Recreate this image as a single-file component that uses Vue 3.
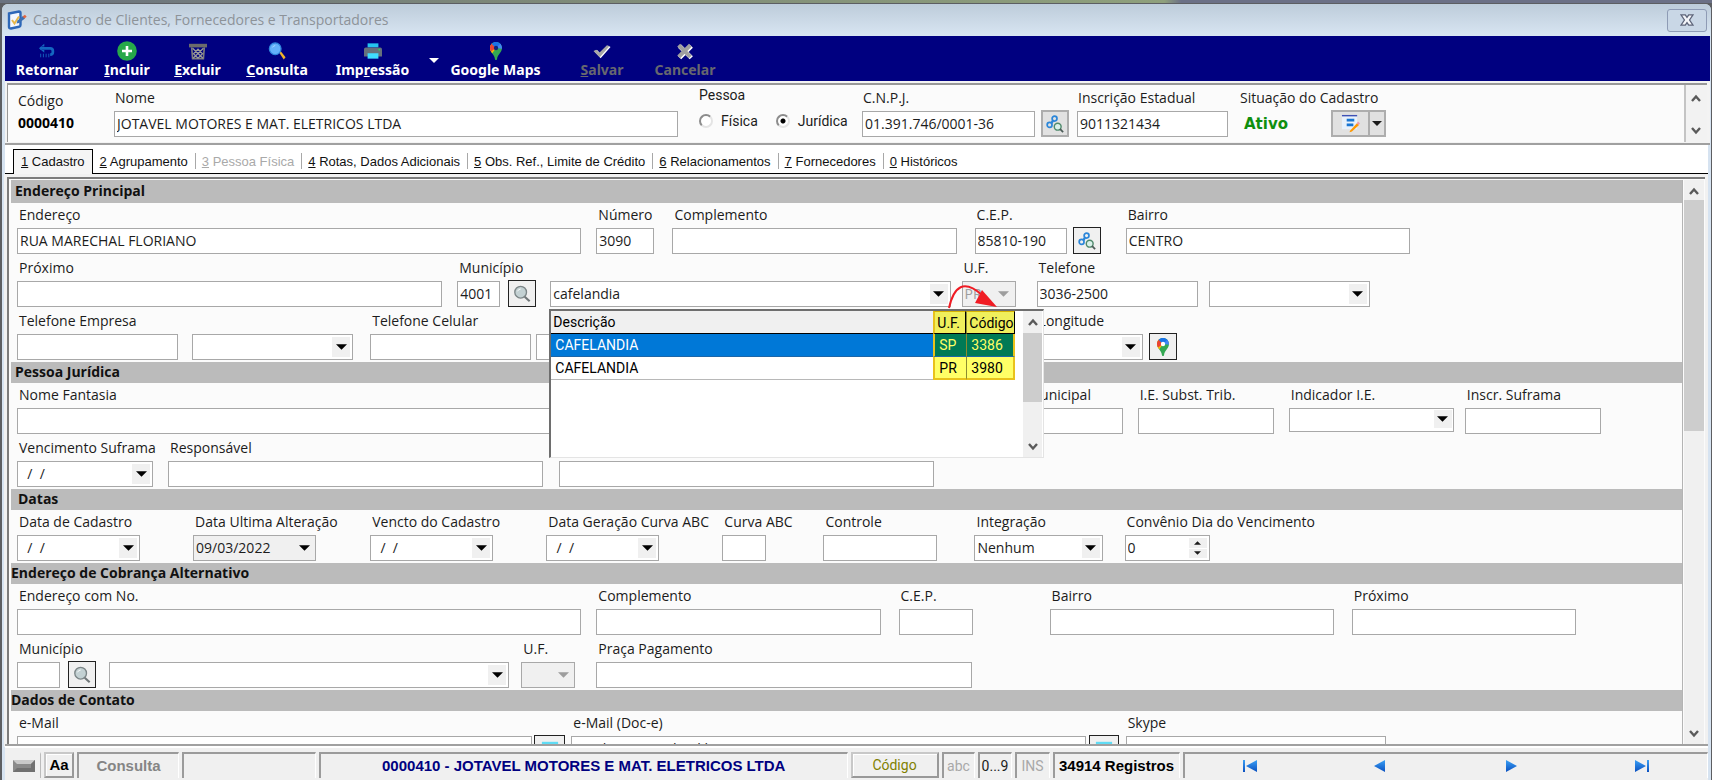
<script setup>
import { ref } from 'vue'

const pessoa = ref('juridica')

const tools = [
  { key: 'retornar', pre: 'Retornar', hot: '', post: '', icon: 'i-return' },
  { key: 'incluir', pre: '', hot: 'I', post: 'ncluir', icon: 'i-plus' },
  { key: 'excluir', pre: '', hot: 'E', post: 'xcluir', icon: 'i-bin' },
  { key: 'consulta', pre: '', hot: 'C', post: 'onsulta', icon: 'i-search' },
  { key: 'impressao', pre: 'Imp', hot: 'r', post: 'essão', icon: 'i-print' },
  { key: 'mais', icon: '' },
  { key: 'maps', pre: 'Google Maps', hot: '', post: '', icon: 'i-pin' },
  { key: 'salvar', pre: '', hot: 'S', post: 'alvar', icon: 'i-check', off: true },
  { key: 'cancelar', pre: 'Cancelar', hot: '', post: '', icon: 'i-cross', off: true },
]

const tabs = [
  { n: '1', t: 'Cadastro' },
  { n: '2', t: 'Agrupamento' },
  { n: '3', t: 'Pessoa Física', off: true },
  { n: '4', t: 'Rotas, Dados Adicionais' },
  { n: '5', t: 'Obs. Ref., Limite de Crédito' },
  { n: '6', t: 'Relacionamentos' },
  { n: '7', t: 'Fornecedores' },
  { n: '0', t: 'Históricos' },
]

const text = (label, value = '') => ({ kind: 'text', label, value })
const select = (label, value = '', extra = {}) => ({ kind: 'select', label, value, ...extra })
const date = (label, value = '  /  /', off = false) => ({ kind: 'date', label, value, off })
const button = (name, icon) => ({ kind: 'button', name, icon })

const sections = [
  {
    title: 'Endereço Principal',
    cls: 'first',
    rows: [
      {
        cls: 'r-endereco',
        fields: [
          text('Endereço', 'RUA MARECHAL FLORIANO'),
          text('Número', '3090'),
          text('Complemento'),
          text('C.E.P.', '85810-190'),
          button('Consultar C.E.P.', 'i-nodes'),
          text('Bairro', 'CENTRO'),
        ],
      },
      {
        cls: 'r-municipio',
        fields: [
          text('Próximo'),
          text('Município', '4001'),
          button('Localizar município', 'i-lens'),
          select('', 'cafelandia', { name: 'Nome do município', popup: true }),
          select('U.F.', 'PR', { off: true }),
          text('Telefone', '3036-2500'),
          select('', '', { name: 'Tipo de telefone' }),
        ],
      },
      {
        cls: 'r-telefone',
        fields: [
          text('Telefone Empresa'),
          select('', '', { name: 'Tipo de telefone da empresa' }),
          text('Telefone Celular'),
          select('', '', { name: 'Tipo de celular' }),
          select('Longitude'),
          button('Abrir mapa', 'i-pin'),
        ],
      },
    ],
  },
  {
    title: 'Pessoa Jurídica',
    cls: 'inset',
    rows: [
      {
        cls: 'r-fantasia',
        fields: [
          text('Nome Fantasia'),
          text('Inscr. Municipal'),
          text('I.E. Subst. Trib.'),
          select('Indicador I.E.', '', { small: true }),
          text('Inscr. Suframa'),
        ],
      },
      {
        cls: 'r-suframa',
        fields: [
          date('Vencimento Suframa'),
          text('Responsável'),
          { ...text(''), name: 'Complemento do responsável' },
        ],
      },
    ],
  },
  {
    title: 'Datas',
    cls: 'deep',
    rows: [
      {
        cls: 'r-datas',
        fields: [
          date('Data de Cadastro'),
          date('Data Ultima Alteração', '09/03/2022', true),
          date('Vencto do Cadastro'),
          date('Data Geração Curva ABC'),
          text('Curva ABC'),
          text('Controle'),
          select('Integração', 'Nenhum'),
          { kind: 'spin', label: 'Convênio Dia do Vencimento', value: '0' },
        ],
      },
    ],
  },
  {
    title: 'Endereço de Cobrança Alternativo',
    cls: '',
    rows: [
      {
        cls: 'r-cobranca',
        fields: [
          text('Endereço com No.'),
          text('Complemento'),
          text('C.E.P.'),
          text('Bairro'),
          text('Próximo'),
        ],
      },
      {
        cls: 'r-praca',
        fields: [
          text('Município'),
          button('Localizar município de cobrança', 'i-lens'),
          select('', '', { name: 'Nome do município de cobrança' }),
          select('U.F.', '', { off: true }),
          text('Praça Pagamento'),
        ],
      },
    ],
  },
  {
    title: 'Dados de Contato',
    cls: '',
    rows: [
      {
        cls: 'r-email',
        fields: [
          text('e-Mail'),
          button('Enviar e-Mail', 'i-mail'),
          text('e-Mail (Doc-e)', 'vendas@jotavel.ind.br'),
          button('Enviar e-Mail (Doc-e)', 'i-mail'),
          text('Skype'),
        ],
      },
    ],
  },
]

const cities = [
  { name: 'CAFELANDIA', uf: 'SP', code: '3386', on: true },
  { name: 'CAFELANDIA', uf: 'PR', code: '3980' },
]

const nav = [
  { name: 'Primeiro', icon: 'i-first' },
  { name: 'Anterior', icon: 'i-prev' },
  { name: 'Próximo', icon: 'i-next' },
  { name: 'Último', icon: 'i-last' },
]
</script>

<template>
  <div class="desk">
    <svg class="sprite" aria-hidden="true">
      <defs>
        <linearGradient id="g-blue" x1="0" y1="0" x2="0" y2="1">
          <stop offset="0" stop-color="#3aa0f5" />
          <stop offset="1" stop-color="#0a50c0" />
        </linearGradient>
        <clipPath id="c-pin"><path d="M9 0C5.500 0 3 2.700 3 6c0 4.500 4.500 6 5 11.500q1 1.200 2 0C10.500 12 15 10.500 15 6c0-3.300-2.500-6-6-6z" /></clipPath>
      </defs>
      <symbol id="i-app" viewBox="0 0 20 20">
        <path d="M2 3.500 12 1.500q1.500 0 1.500 1.500v12q0 1.500-1.500 1.800L4 18.500Q2 18.500 2 17z" fill="#f4f8ff" stroke="#2d67b8" stroke-width="2.400" />
        <path d="M5 10l2.500 3.500L12 6.500" fill="none" stroke="#e8b84a" stroke-width="2" />
        <path d="M9.500 13.500 10.500 10.500l5.500-4.500 2 2.500-6 4.500z" fill="#3c70b4" />
        <path d="M15.500 6.500l2.500-1.800 1.700 2-2.200 1.800z" fill="#e2663e" />
      </symbol>
      <symbol id="i-return" viewBox="0 0 20 20">
        <path d="M2.500 7h11q3 0 3 3v1.500q0 2.500-3 2.500" fill="none" stroke="#1466c0" stroke-width="3" />
        <path d="M1 7l6-5v3H4v4h3v3z" fill="#1466c0" />
        <path d="M3 13v4M6 13v4M9 13v4M12 13v4" stroke="#1466c0" />
      </symbol>
      <symbol id="i-plus" viewBox="0 0 20 20">
        <circle cx="10" cy="10" r="9.800" fill="#27a84a" />
        <path d="M10 5v10M5 10h10" stroke="#fff" stroke-width="2.600" />
      </symbol>
      <symbol id="i-bin" viewBox="0 0 20 20">
        <path d="M0 2h20v4H0z" fill="#6b6b6b" />
        <path d="M3 6l1 12.500h12L17 6" fill="none" stroke="#7c7c7c" stroke-width="1.800" />
        <path d="M4 7l11.500 11M16 7 4.500 18M10 8l-5 5 5 5 5-5z" fill="none" stroke="#9a9a9a" stroke-width="1.400" />
      </symbol>
      <symbol id="i-search" viewBox="0 0 20 20">
        <path d="M12 11l2-1 5.500 7-2 2.500z" fill="#f0b429" />
        <circle cx="8" cy="7.500" r="6.500" fill="#63b0fa" stroke="#2f86dc" stroke-width="1.400" />
        <path d="M5 6q1-2 3-2" fill="none" stroke="#b4dcff" />
      </symbol>
      <symbol id="i-print" viewBox="0 0 20 20">
        <path d="M4 1.500h12V6H4z" fill="#25c4f0" />
        <path d="M0 8q0-2 2-2h16q2 0 2 2v8H0z" fill="#66717c" />
        <path d="M4 12.500h12v6H4z" fill="#3fdcff" />
        <circle cx="17" cy="8.500" r="1" fill="#27d860" />
      </symbol>
      <symbol id="i-pin" viewBox="0 0 18 18">
        <g clip-path="url(#c-pin)">
          <path d="M0 0h18v18H0z" fill="#34a853" />
          <path d="M0 1.500 4 0l5 6-5 7-4-4z" fill="#fbbc04" />
          <path d="M9 6 4.500 1 0 2v6.500l4 1z" fill="#ea4335" />
          <path d="M9 6 4.500 1.800V0H14v3z" fill="#1a73e8" />
          <path d="M9 6 13 2l3-1v6z" fill="#4285f4" />
        </g>
        <circle cx="9" cy="6" r="2.200" fill="currentColor" />
      </symbol>
      <symbol id="i-check" viewBox="0 0 20 20">
        <path d="M1.500 10.500l3-1.500 3.500 3.500L16.500 4l3 1.500L8.500 18z" fill="#fff" />
        <path d="M.5 10l3-1.500L7 12l8.500-8.500 2.500 1.500L7.500 17z" fill="#a6a6a6" />
      </symbol>
      <symbol id="i-cross" viewBox="0 0 20 20">
        <path d="M4 4.500l13 13M17 4.500l-13 13" stroke="#fff" stroke-width="5" />
        <path d="M3 3.500l13 13M16 3.500l-13 13" stroke="#a0a0a0" stroke-width="4.600" />
      </symbol>
      <symbol id="i-nodes" viewBox="0 0 20 20">
        <g fill="none" stroke="#2b86d9" stroke-width="1.900">
          <circle cx="4" cy="11" r="2.700" />
          <circle cx="9.500" cy="4" r="2.700" />
          <path d="M6 9l2-3" stroke-width="2.600" />
        </g>
        <circle cx="13" cy="13" r="3.800" fill="#d9f0ea" stroke="#4f8a6c" stroke-width="1.600" />
        <path d="M15.500 15.500l3.500 3.500" stroke="#4c5c58" stroke-width="2" />
      </symbol>
      <symbol id="i-lens" viewBox="0 0 20 20">
        <circle cx="8.500" cy="8" r="6.500" fill="#c3d1d3" stroke="#7b8587" stroke-width="1.500" />
        <path d="M5 7q1-2.500 3.500-2.500" fill="none" stroke="#fff" />
        <path d="M13 13l5.500 5" stroke="#6f7678" stroke-width="2.400" />
      </symbol>
      <symbol id="i-mail" viewBox="0 0 20 20"><path d="M1 2h18v15H1z" fill="#5fdcf5" /></symbol>
      <symbol id="i-list" viewBox="0 0 20 20">
        <path d="M1 2h16v14H1z" fill="#e8f1fb" />
        <path d="M1 1h16v1.500H1z" fill="#3f51b5" />
        <path d="M6 5h8v3H6zM6 10h7v3H6z" fill="#1976d2" />
        <path d="M9.500 17.500 17 9.500l2 2-7.500 7-2.500.8z" fill="#ff9800" />
        <path d="M16.500 10l1.500-2 2 2-1.500 1.500z" fill="#ef9aa8" />
      </symbol>
      <symbol id="i-key" viewBox="0 0 22 12">
        <path d="M0 0h22v12H0z" fill="#8a8a8a" />
        <path d="M0 0h22l-4 4H4z" fill="#c9c9c9" />
        <path d="M0 12h22V0l-4 4v4H4z" fill="#707070" />
      </symbol>
      <symbol id="i-first" viewBox="0 0 16 14"><path d="M1 1h2v12H1zM15 1v12L4 7z" fill="url(#g-blue)" /></symbol>
      <symbol id="i-prev" viewBox="0 0 16 14"><path d="M13 1v12L2 7z" fill="url(#g-blue)" /></symbol>
      <symbol id="i-next" viewBox="0 0 16 14"><path d="M3 1v12l11-6z" fill="url(#g-blue)" /></symbol>
      <symbol id="i-last" viewBox="0 0 16 14"><path d="M13 1h2v12h-2zM1 1v12l11-6z" fill="url(#g-blue)" /></symbol>
      <symbol id="i-up" viewBox="0 0 12 10"><path d="M2 8l4-4.500L10 8" fill="none" stroke="#5a5a5a" stroke-width="2.400" /></symbol>
      <symbol id="i-down" viewBox="0 0 12 10"><path d="M2 2l4 4.500L10 2" fill="none" stroke="#5a5a5a" stroke-width="2.400" /></symbol>
      <symbol id="i-tri" viewBox="0 0 12 6"><path d="M0 0h12L6 6z" fill="currentColor" /></symbol>
    </svg>

    <main class="window">
      <header class="title">
        <svg class="app-icon"><use href="#i-app" /></svg>
        <h1>Cadastro de Clientes, Fornecedores e Transportadores</h1>
        <button class="close" aria-label="Fechar">
          <svg viewBox="0 0 16 14"><path d="M1 1h5l2 3 2-3h5l-4 6 4 6h-5l-2-3-2 3H1l4-6z" fill="#f4f6fa" stroke="#5d6479" stroke-width="1.500" /></svg>
        </button>
      </header>

      <nav class="toolbar">
        <template v-for="t in tools" :key="t.key">
          <button v-if="t.icon" :class="['tool', t.key]" :disabled="t.off">
            <svg><use :href="'#' + t.icon" /></svg>
            <span>{{ t.pre }}<u v-if="t.hot">{{ t.hot }}</u>{{ t.post }}</span>
          </button>
          <button v-else class="tool more" aria-label="Opções de impressão">
            <svg><use href="#i-tri" /></svg>
          </button>
        </template>
      </nav>

      <section class="head">
        <div class="head-panel">
          <div class="head-grid">
            <div class="codigo"><span>Código</span><b>0000410</b></div>
            <div class="field">
              <label for="nome">Nome</label>
              <input id="nome" class="box" value="JOTAVEL MOTORES E MAT. ELETRICOS LTDA" />
            </div>
            <fieldset class="pessoa">
              <legend>Pessoa</legend>
              <label><input v-model="pessoa" type="radio" name="pessoa" value="fisica" />Física</label>
              <label><input v-model="pessoa" type="radio" name="pessoa" value="juridica" />Jurídica</label>
            </fieldset>
            <div class="field">
              <label for="cnpj">C.N.P.J.</label>
              <input id="cnpj" class="box" value="01.391.746/0001-36" />
            </div>
            <button class="icon-btn soft" aria-label="Consultar C.N.P.J."><svg><use href="#i-nodes" /></svg></button>
            <div class="field">
              <label for="ie">Inscrição Estadual</label>
              <input id="ie" class="box" value="9011321434" />
            </div>
            <div class="situacao">
              <span>Situação do Cadastro</span>
              <div class="sit-line">
                <b>Ativo</b>
                <span class="split">
                  <button aria-label="Alterar situação"><svg class="list-icon"><use href="#i-list" /></svg></button>
                  <button aria-label="Mais situações"><svg class="tri"><use href="#i-tri" /></svg></button>
                </span>
              </div>
            </div>
          </div>
          <div class="mini-scroll">
            <svg><use href="#i-up" /></svg>
            <svg><use href="#i-down" /></svg>
          </div>
        </div>
      </section>

      <div class="tabs" role="tablist">
        <button v-for="(t, i) in tabs" :key="t.n" role="tab" :aria-selected="i === 0" :class="{ on: i === 0 }" :disabled="t.off">
          <u>{{ t.n }}</u> {{ t.t }}
        </button>
      </div>

      <div class="pane">
        <form class="form" @submit.prevent>
          <section v-for="(s, si) in sections" :key="s.title" class="group">
            <h2 :class="s.cls">{{ s.title }}</h2>
            <div v-for="(r, ri) in s.rows" :key="r.cls" :class="['row', r.cls]">
              <template v-for="(f, fi) in r.fields" :key="fi">
                <button v-if="f.kind === 'button'" type="button" class="icon-btn" :aria-label="f.name">
                  <svg><use :href="'#' + f.icon" /></svg>
                </button>
                <div v-else class="field">
                  <label v-if="f.label" :for="`f${si}-${ri}-${fi}`">{{ f.label }}</label>
                  <input v-if="f.kind === 'text'" :id="`f${si}-${ri}-${fi}`" class="box" :value="f.value" :aria-label="f.name" />
                  <div v-else-if="f.kind === 'select'" :class="['combo', { off: f.off, small: f.small }]">
                    <select :id="`f${si}-${ri}-${fi}`" class="box" :disabled="f.off" :aria-label="f.name">
                      <option>{{ f.value }}</option>
                    </select>
                    <span class="drop"><svg><use href="#i-tri" /></svg></span>
                  </div>
                  <div v-else-if="f.kind === 'date'" :class="['combo', { locked: f.off }]">
                    <input :id="`f${si}-${ri}-${fi}`" class="box" :value="f.value" :readonly="f.off" />
                    <button type="button" class="drop" aria-label="Calendário"><svg><use href="#i-tri" /></svg></button>
                  </div>
                  <div v-else class="combo">
                    <input :id="`f${si}-${ri}-${fi}`" class="box" :value="f.value" />
                    <span class="spin">
                      <button type="button" aria-label="Aumentar"><svg class="flip"><use href="#i-tri" /></svg></button>
                      <button type="button" aria-label="Diminuir"><svg><use href="#i-tri" /></svg></button>
                    </span>
                  </div>

                  <div v-if="f.popup" class="popup">
                    <div class="list">
                      <table>
                        <thead>
                          <tr><th>Descrição</th><th class="hl">U.F.</th><th class="hl code">Código</th></tr>
                        </thead>
                        <tbody>
                          <tr v-for="c in cities" :key="c.code" :class="{ on: c.on }">
                            <td>{{ c.name }}</td><td class="hl">{{ c.uf }}</td><td class="hl code">{{ c.code }}</td>
                          </tr>
                        </tbody>
                      </table>
                    </div>
                    <div class="scroll">
                      <svg><use href="#i-up" /></svg>
                      <span class="thumb"></span>
                      <svg><use href="#i-down" /></svg>
                    </div>
                    <svg class="pointer" viewBox="0 0 50 26">
                      <path d="M1 25C6 3 16-4 34 12" fill="none" stroke="#f01c24" stroke-width="2" />
                      <path d="M34 7 49 24 27 20z" fill="#f01c24" />
                    </svg>
                  </div>
                </div>
              </template>
            </div>
          </section>
        </form>
        <div class="scroll main-scroll">
          <svg><use href="#i-up" /></svg>
          <span class="thumb"></span>
          <svg><use href="#i-down" /></svg>
        </div>
      </div>

      <footer class="status">
        <button class="cell" aria-label="Teclado"><svg class="key"><use href="#i-key" /></svg></button>
        <button class="cell raised bold">Aa</button>
        <span class="cell gray bold">Consulta</span>
        <span class="cell"></span>
        <span class="cell navy bold">0000410 - JOTAVEL MOTORES E MAT. ELETRICOS LTDA</span>
        <button class="cell raised olive">Código</button>
        <span class="cell dim">abc</span>
        <span class="cell">0...9</span>
        <span class="cell dim">INS</span>
        <span class="cell bold">34914 Registros</span>
        <span class="cell nav">
          <button v-for="n in nav" :key="n.name" :aria-label="n.name"><svg><use :href="'#' + n.icon" /></svg></button>
        </span>
      </footer>
    </main>
  </div>
</template>

<style>
body { margin: 0; overflow: hidden; }
</style>

<style scoped>
* { box-sizing: border-box; }
button, input, select { font: inherit; color: inherit; margin: 0; }
button { border: 0; background: none; padding: 0; }
svg { display: block; flex: none; }
.sprite { position: absolute; width: 0; height: 0; }

.desk {
  height: 100vh;
  padding: 4px 1px 0 2px;
  background: linear-gradient(90deg, #6a7280, #7d8878 30%, #8fa07c 68%, #6b7086 69%) top / 100% 3px no-repeat, #5c5e62;
  font: 14px/20px "Open Sans", "Noto Sans", sans-serif;
  color: #1c1c1c;
}
.window {
  height: 100%;
  display: flex;
  flex-direction: column;
  padding: 0 1px 0 3px;
  background: #d6e3f1;
  border-radius: 6px 6px 0 0;
}

/* title bar */
.title {
  height: 32px;
  flex: none;
  display: flex;
  align-items: center;
  gap: 6px;
  margin: 0 -1px 0 -3px;
  padding: 0 4px 0 5px;
  border-radius: 6px 6px 0 0;
  background: linear-gradient(#bdccda, #d8e5f2);
}
.app-icon { width: 20px; height: 20px; }
h1 { flex: 1; margin: 0; font-size: 14px; font-weight: 400; color: #8d9399; }
.close {
  width: 40px;
  height: 23px;
  display: grid;
  place-items: center;
  border: 1px solid #8e9bb5;
  border-radius: 3px;
  background: #c9d7e6;
}
.close svg { width: 14px; height: 12px; }

/* toolbar */
.toolbar {
  height: 45px;
  flex: none;
  display: grid;
  grid-template-columns: 84px 76px 65px 94px 97px 26px 97px 22px 72px 94px;
  background: #000080;
  color: #fff;
  font: bold 14px/18px "Noto Sans", "Open Sans", sans-serif;
}
.tool {
  display: flex;
  flex-direction: column;
  align-items: center;
  padding-top: 5px;
}
.tool svg { width: 18px; height: 18px; margin: 1px 0; color: #12257a; }
.tool.incluir svg { width: 20px; height: 20px; margin: 0; }
.tool.salvar { grid-column: 9; }
.tool.more { justify-content: center; padding: 4px 0 0; }
.tool.more svg { width: 10px; height: 5px; color: #fff; }
.tool:disabled { color: #67676f; }

/* record header */
.head {
  flex: none;
  padding: 2px 3px 1px 2px;
  background: #f3f3f3;
  border-bottom: 2px solid #a0a0a0;
}
.head-panel {
  height: 59px;
  display: flex;
  border: solid #989898;
  border-width: 2px 0 0 1px;
  background: #fbfbfb;
}
.head-grid {
  flex: 1;
  display: grid;
  align-items: end;
  grid-template-columns: 96px 564fr 21px 150px 13px 173fr 6px 28px 8px 151fr 12px 146px 298fr;
  padding: 0 0 5px 10px;
}
.head-grid > :nth-child(3) { grid-column: 4; }
.head-grid > :nth-child(4) { grid-column: 6; }
.head-grid > :nth-child(5) { grid-column: 8; }
.head-grid > :nth-child(6) { grid-column: 10; }
.head-grid > :nth-child(7) { grid-column: 12; }
.head .field label { display: block; height: 23px; }
.codigo { display: grid; line-height: 22px; padding-bottom: 3px; }
.codigo b { color: #000; }
.pessoa {
  display: flex;
  gap: 18px;
  margin: 0;
  padding: 0 0 8px;
  border: 0;
  font: 14px/16px "Roboto", "Liberation Sans", sans-serif;
}
.pessoa legend { padding: 0 0 10px; }
.pessoa label { display: flex; align-items: center; gap: 8px; }
.pessoa input {
  appearance: none;
  width: 14px;
  height: 14px;
  border: 2px solid;
  border-color: #8c8c8c #e4e4e4 #e4e4e4 #8c8c8c;
  border-radius: 50%;
  background: #fff;
}
.pessoa input:checked { background: radial-gradient(#000 2px, #fff 3px); }
.situacao > span { display: block; height: 22px; white-space: nowrap; }
.sit-line { display: flex; align-items: center; justify-content: space-between; padding-left: 4px; }
.sit-line b { font: bold 15px/20px "DejaVu Sans", sans-serif; color: #0f8f0f; }
.split { display: flex; height: 27px; border: 2px solid #adadad; background: #e1e1e1; }
.split button { width: 35px; display: grid; place-items: center; }
.split button + button { width: 16px; border-left: 2px solid #adadad; }
.split .list-icon { width: 19px; height: 19px; }
.split .tri { width: 10px; height: 5px; }
.mini-scroll {
  width: 23px;
  display: flex;
  flex-direction: column;
  align-items: center;
  justify-content: space-between;
  padding: 8px 2px 6px 0;
  border-left: 2px solid #c4c4c4;
  background: #f2f2f2;
}
.mini-scroll svg, .scroll svg { width: 12px; height: 10px; }

/* tabs */
.tabs {
  height: 29px;
  flex: none;
  display: flex;
  align-items: flex-end;
  padding-left: 8px;
  margin-right: 2px;
  background: linear-gradient(#000, #000) bottom / 100% 1px no-repeat #fff;
  font: 13px/18px "Liberation Sans", sans-serif;
  color: #111;
}
.tabs button { height: 24px; padding: 0 7px; white-space: nowrap; }
.tabs button:nth-child(n + 3) {
  background: linear-gradient(#a8a8a8, #a8a8a8) left 3px / 1px 16px no-repeat;
}
.tabs button.on { height: 25px; border: solid #000; border-width: 1px 1px 0; background: #f5f5f5; }
.tabs button:disabled { color: #a9a9a9; }

/* form pane */
.pane {
  flex: 1;
  min-height: 0;
  display: flex;
  margin: 3px 5px 0 2px;
  padding-top: 1px;
  border: solid #7c7c7c;
  border-width: 2px 0 0 2px;
  background: #fbfbfb;
  outline: 3px solid #f1f1f1;
}
.form { flex: 1; min-width: 0; overflow: hidden; padding-left: 2px; border-right: 1px solid #b4b4b4; }
h2 {
  height: 21px;
  margin: 0;
  font-size: 14px;
  line-height: 20px;
  font-weight: 700;
  color: #111;
  background: #bbb;
}
h2.first { height: 23px; line-height: 21px; padding-left: 4px; }
h2.inset { padding-left: 4px; }
h2.deep { padding-left: 7px; }
.row { display: grid; padding-left: 6px; height: 53px; align-items: end; padding-bottom: 2px; }
.field { position: relative; min-width: 0; }
.field label { display: block; height: 24px; padding: 0 0 0 1px; white-space: nowrap; }
.row .field label { height: 25px; padding: 2px 0 0 2px; }
.row > :nth-child(2) { grid-column: 3; }
.row > :nth-child(3) { grid-column: 5; }
.row > :nth-child(4) { grid-column: 7; }
.row > :nth-child(5) { grid-column: 9; }
.row > :nth-child(6) { grid-column: 11; }
.row > :nth-child(7) { grid-column: 13; }
.row > :nth-child(8) { grid-column: 15; }
.r-endereco { grid-template-columns: 564fr 15px 58fr 18px 284fr 18px 92fr 6px 28px 25px 284fr 272fr; }
.r-municipio { grid-template-columns: 425fr 15px 43fr 8px 28px 14px 400fr 11px 54fr 21px 161fr 11px 161fr 312fr; }
.r-telefone { grid-template-columns: 161fr 14px 161fr 17px 161fr 5px 161fr 339fr 106fr 6px 28px 505fr; }
.r-fantasia { grid-template-columns: 564fr 405fr 136fr 15px 136fr 15px 165fr 11px 136fr 81fr; }
.r-suframa { grid-template-columns: 136fr 15px 375fr 16px 374fr 748fr; }
.r-datas { grid-template-columns: 123fr 53px 123fr 54px 123fr 53px 113fr 63px 44fr 57px 114fr 37px 128fr 22px 85fr 472fr; }
.r-cobranca { grid-template-columns: 564fr 15px 284fr 18px 74fr 77px 284fr 18px 224fr 106fr; }
.r-praca { grid-template-columns: 43fr 8px 28px 13px 400fr 12px 54fr 21px 375fr 710fr; }
.r-email { grid-template-columns: 515fr 2px 31px 6px 514fr 3px 30px 7px 260fr 296fr; }

.box {
  display: block;
  width: 100%;
  height: 26px;
  padding: 0 0 2px 2px;
  border: 1px solid #a8a8a8;
  border-radius: 0;
  outline: 0;
  background: #fff;
  font-size: 14px;
  line-height: 20px;
}
select.box { appearance: none; padding: 0 24px 0 2px; opacity: 1; }
.combo { position: relative; }
.combo.small .box { height: 24px; margin-bottom: 2px; }
.combo .drop {
  position: absolute;
  inset: 3px 3px 3px auto;
  width: 18px;
  display: grid;
  place-items: center;
  background: #f0f0f0;
  color: #000;
  pointer-events: none;
}
.combo.small .drop { inset: 2px 2px 4px auto; }
.drop svg { width: 11px; height: 6px; }
.combo.off .box { background: #f0f0f0; color: #9d9d9d; }
.combo.off .drop { color: #9d9d9d; }
.combo.locked .box { background: #f0f0f0; }
.spin {
  position: absolute;
  inset: 3px 3px 3px auto;
  width: 18px;
  display: grid;
  gap: 1px;
  background: #fff;
}
.spin button { display: grid; place-items: center; background: #f0f0f0; }
.spin svg { width: 7px; height: 4px; }
.flip { rotate: 180deg; }
.icon-btn {
  width: 100%;
  height: 27px;
  display: grid;
  place-items: center;
  border: 1px solid #222;
  background: #f0f0f0;
}
.icon-btn svg { width: 18px; height: 18px; color: #fff; }
.icon-btn.soft { border: 2px solid #adadad; background: #e1e1e1; }

/* city lookup list */
.popup {
  position: absolute;
  z-index: 2;
  top: 28px;
  left: -1px;
  width: 495px;
  height: 149px;
  display: flex;
  padding-right: 1px;
  border: solid #6e6e6e;
  border-width: 2px 1px 1px 2px;
  border-right-color: #e4e4e4;
  border-bottom-color: #e4e4e4;
  background: #fff;
  font: 14px/20px "Roboto", "Liberation Sans", sans-serif;
  color: #000;
}
.popup .list { flex: 1; }
.popup table { width: 464px; border-collapse: separate; border-spacing: 0; table-layout: fixed; }
.popup th, .popup td { height: 23px; padding: 0 0 0 4px; text-align: left; font-weight: 400; border-bottom: 1px solid #b8b8b8; }
.popup th { padding-left: 2px; background: #f0f0f0; border-bottom: 1px solid #000; }
.popup .hl { width: 33px; background: #ffff66; border-left: 2px solid #e9c21b; border-bottom-color: #a3a339; }
.popup th.hl { background: #f0ef5c; border-top: 1px solid #d8b400; border-right: 1px solid #000; border-bottom: 1px solid #000; }
.popup .code { width: 49px; border-left: 1px solid #8b8b30; border-right: 2px solid #e9c21b; }
.popup td.code { padding-left: 4px; }
.popup tbody tr:last-child .hl { border-bottom: 2px solid #e9c21b; }
.popup tr.on td { background: #0078d7; color: #fff; border-bottom-color: #1c66a8; }
.popup tr.on .hl { background: #007a55; color: #ffff66; }
.pointer { position: absolute; top: -28px; left: 397px; width: 50px; height: 26px; overflow: visible; }

.scroll {
  width: 19px;
  display: flex;
  flex-direction: column;
  align-items: center;
  padding: 6px 0 5px;
  background: #f0f0f0;
}
.thumb { width: 100%; height: 69px; margin-top: 6px; background: #cdcdcd; }
.scroll svg:last-child { margin-top: auto; }
.main-scroll { width: 20px; margin: 0 1px; }
.main-scroll .thumb { height: 231px; margin-top: 4px; }

/* status bar */
.status {
  height: 36px;
  flex: none;
  display: grid;
  grid-template-columns: 36px 30px 102px 134px 525fr 88px 33px 34px 35px 127px 522fr;
  gap: 3px;
  position: relative;
  z-index: 3;
  margin-right: 2px;
  padding: 6px 0 2px;
  border-top: 2px solid #a0a0a0;
  box-shadow: inset 0 2px #fff;
  background: #f0f0f0;
  font: 14px/20px "Roboto", "Liberation Sans", sans-serif;
}
.cell {
  display: grid;
  place-items: center;
  border: solid #9b9b9b;
  border-width: 2px 1px 0 2px;
  border-right-color: #fff;
  white-space: nowrap;
}
.cell:first-child { border-color: #f0f0f0 #bbb #f0f0f0 #f0f0f0; }
.raised { border: 2px solid; border-color: #c8c8c8 #999 #999 #c8c8c8; box-shadow: inset 1px 1px #fff; }
.bold { font: bold 15px/20px "Liberation Sans", sans-serif; color: #000; }
.gray { color: #858585; }
.navy { color: #000080; }
.olive { color: #808000; }
.dim { color: #a8a8a8; }
.key { width: 22px; height: 12px; }
.cell.nav { grid-auto-flow: column; grid-auto-columns: 1fr; justify-items: stretch; }
.nav button { display: grid; place-items: center; }
.nav svg { width: 16px; height: 14px; }
</style>
